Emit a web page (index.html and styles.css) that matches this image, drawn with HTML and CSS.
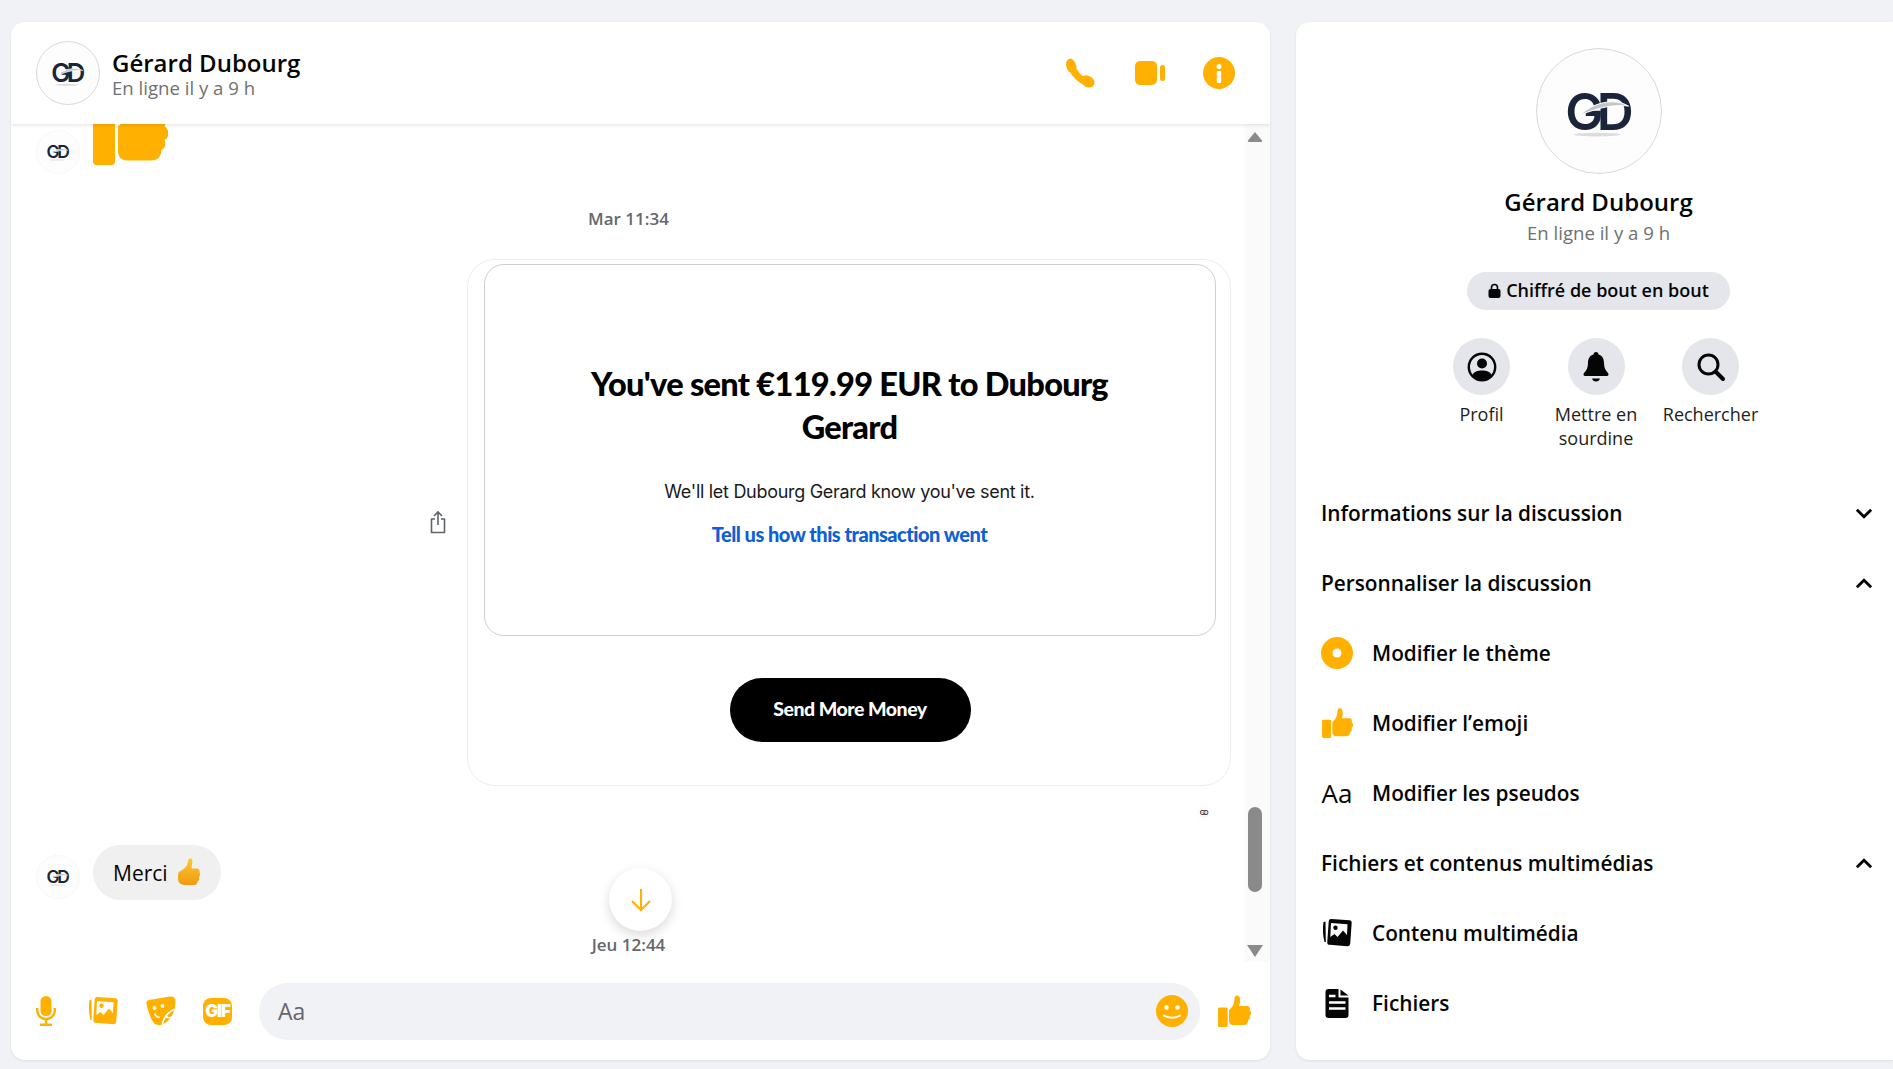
FILE: index.html
```html
<!DOCTYPE html>
<html lang="fr">
<head>
    <meta charset="UTF-8">
    <meta name="viewport" content="width=device-width, initial-scale=1.0">
    <title>Gérard Dubourg</title>
    <link rel="stylesheet" href="styles.css">
</head>
<body>
    <!-- Shared icons -->
    <svg class="sprite">
        <defs>
            <g id="logo">
                <text class="logo-text" x="60" y="82" text-anchor="middle">GD</text>
                <path d="M44 67C56 55 78 49 93 58C80 56 64 59 44 67Z" fill="#c2c5ca" stroke="#fff" stroke-width="1"/>
                <ellipse cx="61" cy="87" rx="24" ry="1.8" fill="#dcdcde"/>
            </g>
            <g id="thumb">
                <path d="M1.500 12.500H8.200A1.500 1.500 0 0 1 9.700 14V30.500A1.500 1.500 0 0 1 8.200 32H1.500A1.500 1.500 0 0 1 0 30.500V14A1.500 1.500 0 0 1 1.500 12.500Z"/>
                <path d="M11 15C15 12 16.500 8 16.500 3C16.500 0 20.500 -0.500 21.500 2C23 6 21.500 9 21 11H29.500C31.500 11 32.500 13 31.500 15C33.800 16.500 33.500 20 31.500 21C32.300 23 31.500 25 30 25.500C30.200 28 28.500 30 26 30H15C12.500 30 11 28.500 11 26Z"/>
            </g>
            <g id="photos">
                <path d="M3.500 3.500L1.500 4C0.500 10 0.800 18 2.500 24L3.800 24Z"/>
                <rect x="6" y="1.500" width="23" height="26" rx="2.500" transform="rotate(4 17 14)"/>
                <path d="M9 5L25.500 6.200L25 17L21 12.500L15.500 19L12.500 16L8.300 19Z" fill="#fff"/>
                <circle cx="13.500" cy="9.800" r="2.200"/>
            </g>
            <g id="file">
                <path d="M3 0H13V8.500H23V26A3 3 0 0 1 20 29H3A3 3 0 0 1 0 26V3A3 3 0 0 1 3 0Z"/>
                <path d="M15 0.500L23 6.500H15Z"/>
                <path d="M3.500 7H10M3.500 13.500H20M3.500 19.500H20" stroke="#fff" stroke-width="2.600"/>
            </g>
        </defs>
    </svg>

    <div class="page">
        <!-- Discussion -->
        <main class="chat">
            <header class="chat-header">
                <div class="avatar avatar-md"><svg viewBox="0 0 126 126"><use href="#logo"/></svg></div>
                <div class="chat-title">
                    <div class="chat-name">Gérard Dubourg</div>
                    <div class="chat-status">En ligne il y a 9 h</div>
                </div>
                <div class="chat-actions">
                    <svg class="icon" width="31" height="30" viewBox="0 0 31 30">
                        <path d="M6 6C7.500 14 14 22 24 25" fill="none" stroke="currentColor" stroke-width="7"/>
                        <path d="M1 6C1 2 4 0 7 1C9 2 11 6 11.500 9C11.500 11 10 12 8.500 13L4 14C2 11 1 9 1 6Z"/>
                        <path d="M15 21L18 18.500C20 17 22 17 24 18C27 19.500 30 21.500 29.500 25C29 28.500 26 30 23 29.500C20 29 17 26 15 21Z"/>
                    </svg>
                    <svg class="icon" width="30" height="24" viewBox="0 0 30 24">
                        <rect x="0" y="0" width="22" height="24" rx="5"/>
                        <rect x="25" y="4" width="5" height="16" rx="2.500"/>
                    </svg>
                    <svg class="icon" width="32" height="32" viewBox="0 0 32 32">
                        <circle cx="16" cy="16" r="16"/>
                        <circle cx="16" cy="9.500" r="2.500" fill="#fff"/>
                        <rect x="13.800" y="14" width="4.400" height="12" rx="1" fill="#fff"/>
                    </svg>
                </div>
            </header>

            <div class="chat-body">
                <div class="messages">
                    <div class="msg-row msg-row-clip">
                        <div class="avatar avatar-sm"><svg viewBox="0 0 126 126"><use href="#logo"/></svg></div>
                        <svg class="icon big-thumb" width="75" height="41" viewBox="0 14 33 18" preserveAspectRatio="none"><use href="#thumb"/></svg>
                    </div>

                    <div class="time-label time-first">Mar 11:34</div>

                    <div class="sent-row">
                        <svg class="share" width="18" height="24" viewBox="0 0 18 24" fill="none" stroke="#5f6368" stroke-width="1.600">
                            <path d="M9 15V2M5 6L9 2L13 6"/>
                            <path d="M6 9H2.500V22.500H15.500V9H12" stroke-linejoin="round"/>
                        </svg>
                        <div class="share-card">
                            <div class="receipt">
                                <h1>You've sent €119.99 EUR to Dubourg Gerard</h1>
                                <p>We'll let Dubourg Gerard know you've sent it.</p>
                                <a href="#">Tell us how this transaction went</a>
                            </div>
                            <button type="button" class="send-more">Send More Money</button>
                        </div>
                    </div>

                    <div class="seen">
                        <div class="avatar avatar-xs"><svg viewBox="0 0 126 126"><use href="#logo"/></svg></div>
                    </div>

                    <div class="msg-row msg-row-merci">
                        <div class="avatar avatar-sm"><svg viewBox="0 0 126 126"><use href="#logo"/></svg></div>
                        <div class="bubble">
                            Merci
                            <svg width="24" height="27" viewBox="0 0 24 27">
                                <defs>
                                    <linearGradient id="emoji-thumb" x1="0" y1="0" x2="0" y2="1">
                                        <stop offset="0" stop-color="#fdc72f"/>
                                        <stop offset="1" stop-color="#f19a12"/>
                                    </linearGradient>
                                </defs>
                                <path d="M2 14C5 12 9 10 10.500 6C11 3 11.500 0 14 0.500C16 1 15.500 5 14.500 9C14.500 10 15 10.500 16 10.500H20C22 10.500 23 12 22.500 14C23.500 16 23 18 22 19C22.500 21 22 22.500 20.500 23.500C20.500 25.500 19 27 17 27H8C4 27 1 25 1 20C1 17 1 15 2 14Z" fill="url(#emoji-thumb)"/>
                            </svg>
                        </div>
                    </div>

                    <div class="time-label time-last">Jeu 12:44</div>

                    <button type="button" class="to-bottom">
                        <svg width="22" height="24" viewBox="0 0 22 24" fill="none" stroke="currentColor" stroke-width="2">
                            <path d="M11 1V22M2 13L11 22L20 13"/>
                        </svg>
                    </button>
                </div>

                <div class="scrollbar">
                    <svg width="16" height="11" viewBox="0 0 16 11"><path d="M8 1L15 9.500Q15.500 11 14 11H2Q.5 11 1 9.500Z"/></svg>
                    <div class="scroll-thumb"></div>
                    <svg width="16" height="12" viewBox="0 0 16 12"><path d="M8 12L16 0H0Z"/></svg>
                </div>
            </div>

            <footer class="composer">
                <svg class="icon mic" width="20" height="30" viewBox="0 0 20 30">
                    <rect x="4.500" y="0" width="11" height="20" rx="5.500"/>
                    <path d="M1.200 12V14.500C1.200 19.500 5 23 10 23C15 23 18.800 19.500 18.800 14.500V12" fill="none" stroke="currentColor" stroke-width="2.400"/>
                    <path d="M10 23V28M4 28.800H16" fill="none" stroke="currentColor" stroke-width="2.400"/>
                </svg>
                <svg class="icon" width="30" height="30" viewBox="0 0 30 30"><use href="#photos"/></svg>
                <svg class="icon sticker" width="30" height="30" viewBox="0 0 30 30">
                    <path d="M3 4L24 0.500C27 0 29.500 2 29.500 5C29.500 14 26 25 16 28.500C14 29.500 11 29.500 9 28C5 25 2 15 0.500 8C0 6 1 4.500 3 4Z"/>
                    <circle cx="8.500" cy="12" r="1.900" fill="#fff"/>
                    <circle cx="16.500" cy="10" r="1.900" fill="#fff"/>
                    <path d="M8.500 17.500C9.500 20 11.500 21.500 14 21.500M16.500 28C17.500 22 21 17 28 13.500M19.500 19.500C21 22 23.500 22.500 25.500 21" fill="none" stroke="#fff" stroke-width="1.700"/>
                </svg>
                <div class="gif-icon">GIF</div>
                <div class="composer-input">
                    <span class="composer-placeholder">Aa</span>
                    <svg class="icon" width="32" height="32" viewBox="0 0 32 32">
                        <circle cx="16" cy="16" r="16"/>
                        <circle cx="10.500" cy="12.500" r="2.200" fill="#fff"/>
                        <circle cx="21.500" cy="12.500" r="2.200" fill="#fff"/>
                        <path d="M8 20.500C12 23.500 20 23.500 24 20.500" fill="none" stroke="#fff" stroke-width="2" stroke-linecap="round"/>
                    </svg>
                </div>
                <svg class="icon" width="33" height="32" viewBox="0 0 33 32"><use href="#thumb"/></svg>
            </footer>
        </main>

        <!-- Panel on the right -->
        <aside class="side">
            <div class="profile">
                <div class="avatar avatar-lg"><svg viewBox="0 0 126 126"><use href="#logo"/></svg></div>
                <div class="profile-name">Gérard Dubourg</div>
                <div class="profile-status">En ligne il y a 9 h</div>
                <div class="e2e-pill">
                    <svg width="13" height="15" viewBox="0 0 13 15">
                        <path d="M3.500 7V4.500a3 3 0 0 1 6 0V7" fill="none" stroke="#050505" stroke-width="1.600"/>
                        <rect x="0.500" y="6" width="12" height="9" rx="2" fill="#050505"/>
                    </svg>
                    Chiffré de bout en bout
                </div>
            </div>

            <div class="quick-actions">
                <div class="quick-action">
                    <div class="quick-circle">
                        <svg width="30" height="30" viewBox="0 0 30 30">
                            <circle cx="15" cy="15" r="13.200" fill="none" stroke="#050505" stroke-width="2.400"/>
                            <circle cx="15" cy="11.500" r="5"/>
                            <path d="M5.500 23C7 19.500 10.500 18.500 15 18.500C19.500 18.500 23 19.500 24.500 23C22 26 19 27.500 15 27.500C11 27.500 8 26 5.500 23Z"/>
                        </svg>
                    </div>
                    <span>Profil</span>
                </div>
                <div class="quick-action">
                    <div class="quick-circle">
                        <svg width="26" height="30" viewBox="0 0 26 30">
                            <path d="M13 0C14.500 0 15.500 1 15.500 2.500C19.500 3.500 21 7 21 11C21 16 23 19 25 21C26 22.500 25.500 24 24 24H2C0.500 24 0 22.500 1 21C3 19 5 16 5 11C5 7 6.500 3.500 10.500 2.500C10.500 1 11.500 0 13 0Z"/>
                            <path d="M9 26.500H17C16.500 28.500 15 29.500 13 29.500C11 29.500 9.500 28.500 9 26.500Z"/>
                        </svg>
                    </div>
                    <span>Mettre en sourdine</span>
                </div>
                <div class="quick-action">
                    <div class="quick-circle">
                        <svg width="30" height="30" viewBox="0 0 30 30" fill="none" stroke="#050505">
                            <circle cx="12.500" cy="12.500" r="9.500" stroke-width="3"/>
                            <path d="M19.500 19.500L27 27" stroke-width="4" stroke-linecap="round"/>
                        </svg>
                    </div>
                    <span>Rechercher</span>
                </div>
            </div>

            <div class="side-list">
                <div class="side-row side-heading">
                    Informations sur la discussion
                    <svg class="chevron" width="18" height="11" viewBox="0 0 16 10"><path d="M1.500 1.500L8 8L14.500 1.500"/></svg>
                </div>
                <div class="side-row side-heading">
                    Personnaliser la discussion
                    <svg class="chevron" width="18" height="11" viewBox="0 0 16 10"><path d="M1.500 8.500L8 2L14.500 8.500"/></svg>
                </div>
                <div class="side-row">
                    <span class="row-icon">
                        <svg class="icon" width="32" height="32" viewBox="0 0 32 32">
                            <circle cx="16" cy="16" r="16"/>
                            <circle cx="16" cy="16" r="4.500" fill="#fff"/>
                        </svg>
                    </span>
                    Modifier le thème
                </div>
                <div class="side-row">
                    <span class="row-icon">
                        <svg class="icon" width="31" height="30" viewBox="0 0 33 32"><use href="#thumb"/></svg>
                    </span>
                    Modifier l’emoji
                </div>
                <div class="side-row">
                    <span class="row-icon row-icon-text">Aa</span>
                    Modifier les pseudos
                </div>
                <div class="side-row side-heading">
                    Fichiers et contenus multimédias
                    <svg class="chevron" width="18" height="11" viewBox="0 0 16 10"><path d="M1.500 8.500L8 2L14.500 8.500"/></svg>
                </div>
                <div class="side-row">
                    <span class="row-icon">
                        <svg width="30" height="30" viewBox="0 0 30 30" fill="#050505"><use href="#photos"/></svg>
                    </span>
                    Contenu multimédia
                </div>
                <div class="side-row">
                    <span class="row-icon">
                        <svg width="24" height="29" viewBox="0 0 23 29" fill="#050505"><use href="#file"/></svg>
                    </span>
                    Fichiers
                </div>
            </div>
        </aside>
    </div>
</body>
</html>
```

FILE: styles.css
```css
* {
    box-sizing: border-box;
}
body {
    margin: 0;
    background-color: #f0f2f5;
    color: #050505;
    font-family: "Open Sans", "Noto Sans", Arial, sans-serif;
    overflow: hidden;
}
.sprite {
    display: none;
}
.logo-text {
    font-family: Inter, "Liberation Sans", sans-serif;
    font-size: 52px;
    font-weight: 600;
    letter-spacing: -7px;
    fill: #1b2539;
}
.icon {
    display: block;
    flex: none;
    color: #ffb000;
    fill: #ffb000;
}
.page {
    display: flex;
    gap: 26px;
    height: 1069px;
    padding: 22px 0 9px 11px;
}

/* Discussion */
.chat {
    display: flex;
    flex-direction: column;
    width: 1259px;
    background-color: white;
    border-radius: 14px;
    box-shadow: 0 1px 3px rgba(0, 0, 0, 0.08);
    overflow: hidden;
}
.chat-header {
    position: relative;
    z-index: 1;
    display: flex;
    align-items: center;
    flex: none;
    height: 102px;
    padding: 0 35px 0 25px;
    box-shadow: 0 1px 4px rgba(0, 0, 0, 0.12);
}
.avatar {
    display: flex;
    flex: none;
    border-radius: 50%;
    background-color: #fdfdfd;
    border: 1px solid #f7f7f7;
}
.avatar svg {
    display: block;
    width: 100%;
    height: 100%;
}
.avatar-lg {
    width: 126px;
    height: 126px;
    border: 1px solid #d9d9d9;
}
.avatar-md {
    width: 64px;
    height: 64px;
    border: 1px solid #d9d9d9;
}
.avatar-sm {
    width: 44px;
    height: 44px;
}
.avatar-xs {
    width: 16px;
    height: 16px;
    border: none;
}
.chat-title {
    margin-left: 12px;
}
.chat-name {
    font-size: 24px;
    font-weight: 600;
    line-height: 28px;
}
.chat-status {
    font-size: 18.6px;
    line-height: 21px;
    color: #707070;
}
.chat-actions {
    display: flex;
    align-items: center;
    gap: 39px;
    margin-left: auto;
}
.chat-actions .icon:last-child {
    margin-left: -1px;
}
.chat-body {
    display: flex;
    flex: 1;
    min-height: 0;
}
.messages {
    position: relative;
    flex: 1;
    min-width: 0;
    padding: 0 14px 0 25px;
    overflow: hidden;
}
.msg-row {
    display: flex;
    align-items: center;
    gap: 13px;
}
.msg-row-clip {
    align-items: flex-start;
}
.msg-row-clip .avatar {
    margin-top: 6px;
}
.big-thumb {
    display: block;
}
.time-label {
    padding-right: 10px;
    font-size: 17px;
    font-weight: 600;
    line-height: 22px;
    color: #65676b;
    text-align: center;
}
.time-first {
    margin-top: 34px;
}
.sent-row {
    display: flex;
    align-items: center;
    justify-content: flex-end;
    gap: 20px;
    margin-top: 29px;
}
.share {
    margin-bottom: 2px;
}
.share-card {
    display: flex;
    flex-direction: column;
    align-items: center;
    width: 764px;
    height: 527px;
    padding: 4px 15px 0 16px;
    border: 1px solid #ececec;
    border-radius: 28px;
}
.receipt {
    display: flex;
    flex-direction: column;
    align-items: center;
    width: 732px;
    height: 372px;
    padding: 97px 60px 0;
    border: 1px solid #cfcfcf;
    border-radius: 20px;
    text-align: center;
}
.receipt h1 {
    margin: 0;
    font-family: Lato, sans-serif;
    font-size: 32.5px;
    font-weight: 900;
    line-height: 43px;
    letter-spacing: -0.7px;
    color: black;
}
.receipt p {
    margin: 32px 0 0;
    font-family: Inter, sans-serif;
    font-size: 18px;
    line-height: 24px;
    letter-spacing: -0.3px;
    color: #1a1a1a;
}
.receipt a {
    margin-top: 18px;
    font-family: Lato, sans-serif;
    font-size: 20px;
    font-weight: 900;
    line-height: 24px;
    letter-spacing: -0.5px;
    color: #0f5fd8;
    text-decoration: none;
}
.send-more {
    width: 241px;
    height: 64px;
    margin: 42px 0 0 1px;
    padding: 0 0 4px;
    border: none;
    border-radius: 32px;
    background-color: black;
    color: white;
    font-family: Lato, sans-serif;
    font-size: 19.5px;
    font-weight: 900;
    letter-spacing: -0.5px;
}
.seen {
    display: flex;
    justify-content: flex-end;
    margin-top: 19px;
    padding-right: 19px;
}
.msg-row-merci {
    margin-top: 32px;
}
.bubble {
    display: flex;
    align-items: center;
    gap: 9px;
    height: 55px;
    margin-top: -8px;
    padding: 0 20px;
    border-radius: 28px;
    background-color: #f0f0f0;
    font-size: 21px;
}
.bubble svg {
    margin-top: -2px;
}
.time-last {
    margin-top: 34px;
}
.to-bottom {
    position: absolute;
    left: 598px;
    top: 744px;
    display: flex;
    align-items: center;
    justify-content: center;
    width: 63px;
    height: 63px;
    padding: 0;
    border: none;
    border-radius: 50%;
    background-color: white;
    color: #ffb000;
    box-shadow: 0 4px 12px rgba(0, 0, 0, 0.15);
}
.scrollbar {
    display: flex;
    flex-direction: column;
    align-items: center;
    flex: none;
    width: 25px;
    padding: 7px 5px 0 0;
    background-color: #fafafa;
    fill: #8a8a8a;
}
.scroll-thumb {
    flex: none;
    width: 14px;
    height: 85px;
    margin-top: 665px;
    margin-bottom: 53px;
    border-radius: 7px;
    background-color: #8a8a8a;
}
.composer {
    display: flex;
    align-items: center;
    flex: none;
    height: 98px;
    padding: 0 19px 0 25px;
}
.composer .icon + .icon {
    margin-left: 27px;
}
.composer .mic {
    margin-right: 5px;
}
.composer .icon + .sticker {
    margin-left: 28px;
}
.gif-icon {
    flex: none;
    width: 29px;
    height: 27px;
    margin-left: 27px;
    border-radius: 8px;
    background-color: #ffb000;
    color: white;
    font-family: Inter, sans-serif;
    font-size: 17px;
    font-weight: 900;
    line-height: 27px;
    letter-spacing: -1px;
    text-align: center;
}
.composer-input {
    display: flex;
    align-items: center;
    justify-content: space-between;
    flex: none;
    width: 941px;
    height: 57px;
    margin-left: 27px;
    margin-right: 18px;
    padding: 0 12px 0 19px;
    border-radius: 29px;
    background-color: #f0f2f5;
}
.composer-placeholder {
    font-size: 23px;
    color: #65676b;
}

/* Panel on the right */
.side {
    flex: 1;
    min-width: 0;
    background-color: white;
    border-radius: 14px 0 0 14px;
    box-shadow: 0 1px 3px rgba(0, 0, 0, 0.08);
}
.profile {
    display: flex;
    flex-direction: column;
    align-items: center;
    padding: 26px 0 0 8px;
}
.profile-name {
    margin-top: 12px;
    font-size: 24px;
    font-weight: 600;
    line-height: 32px;
}
.profile-status {
    margin-top: 3px;
    font-size: 18.6px;
    line-height: 24px;
    color: #707070;
}
.e2e-pill {
    display: flex;
    align-items: center;
    justify-content: center;
    gap: 5px;
    width: 263px;
    height: 38px;
    margin-top: 27px;
    padding-bottom: 2px;
    border-radius: 19px;
    background-color: #e4e6eb;
    font-size: 18px;
    font-weight: 600;
}
.quick-actions {
    display: flex;
    justify-content: center;
    margin-top: 28px;
    padding-left: 3px;
}
.quick-action {
    display: flex;
    flex-direction: column;
    align-items: center;
    width: 114.5px;
    font-size: 18px;
    line-height: 24px;
    color: #1c1e21;
    text-align: center;
}
.quick-circle {
    display: flex;
    align-items: center;
    justify-content: center;
    width: 57px;
    height: 57px;
    margin-bottom: 7px;
    border-radius: 50%;
    background-color: #e4e6eb;
    fill: #050505;
}
.side-list {
    margin-top: 28px;
    padding: 0 20px 0 25px;
}
.side-row {
    display: flex;
    align-items: center;
    height: 70px;
    font-size: 20.8px;
    font-weight: 600;
}
.side-heading {
    justify-content: space-between;
}
.chevron {
    fill: none;
    stroke: #050505;
    stroke-width: 2.6;
}
.row-icon {
    display: flex;
    align-items: center;
    justify-content: center;
    width: 32px;
    margin-right: 19px;
}
.row-icon-text {
    font-size: 26px;
    font-weight: 400;
}
```
